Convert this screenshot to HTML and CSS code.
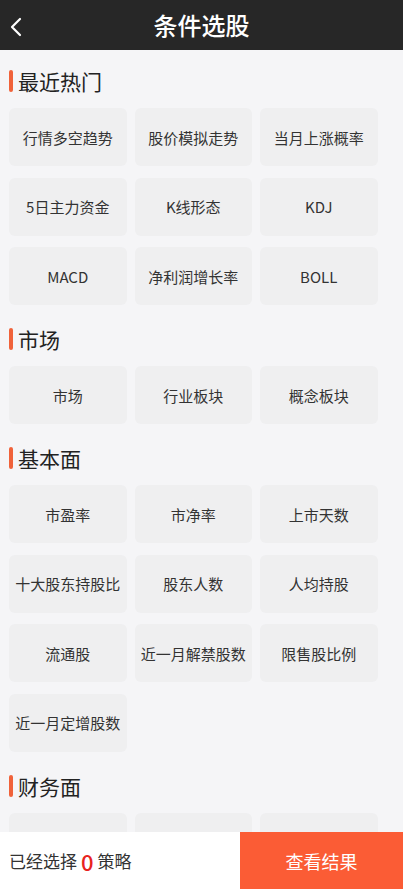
FILE: index.html
```html
<!DOCTYPE html>
<html lang="zh-CN">
<head>
  <meta charset="UTF-8">
  <meta name="viewport" content="width=device-width, initial-scale=1.0">
  <link rel="stylesheet" href="styles.css">
  <title>条件选股</title>
</head>
<body>
  <div class="page">
    <div class="header">
      <span class="back">
        <svg width="14" height="20" viewBox="0 0 14 20"><path d="M11 2 L3 10 L11 18" fill="none" stroke="#fff" stroke-width="2.2" stroke-linecap="round" stroke-linejoin="round"/></svg>
      </span>
      <h1 class="title">条件选股</h1>
    </div>

    <div class="content">
      <div class="section">
        <div class="section-title">最近热门</div>
        <div class="grid">
          <div class="item">行情多空趋势</div>
          <div class="item">股价模拟走势</div>
          <div class="item">当月上涨概率</div>
          <div class="item">5日主力资金</div>
          <div class="item">K线形态</div>
          <div class="item">KDJ</div>
          <div class="item">MACD</div>
          <div class="item">净利润增长率</div>
          <div class="item">BOLL</div>
        </div>
      </div>

      <div class="section">
        <div class="section-title">市场</div>
        <div class="grid">
          <div class="item">市场</div>
          <div class="item">行业板块</div>
          <div class="item">概念板块</div>
        </div>
      </div>

      <div class="section">
        <div class="section-title">基本面</div>
        <div class="grid">
          <div class="item">市盈率</div>
          <div class="item">市净率</div>
          <div class="item">上市天数</div>
          <div class="item">十大股东持股比</div>
          <div class="item">股东人数</div>
          <div class="item">人均持股</div>
          <div class="item">流通股</div>
          <div class="item">近一月解禁股数</div>
          <div class="item">限售股比例</div>
          <div class="item">近一月定增股数</div>
        </div>
      </div>

      <!-- rest of the list is hidden under the footer -->
      <div class="section">
        <div class="section-title">财务面</div>
        <div class="grid">
          <div class="item"></div>
          <div class="item"></div>
          <div class="item"></div>
        </div>
      </div>
    </div>

    <div class="footer">
      <div class="selected">已经选择 <span class="count">0</span> 策略</div>
      <div class="submit">查看结果</div>
    </div>
  </div>
</body>
</html>
```

FILE: styles.css
```css
body {
  margin: 0;
  font-family: "Noto Sans CJK SC", "Noto Sans", sans-serif;
  background-color: #f5f5f7;
  color: #333;
}

.page {
  display: flex;
  flex-direction: column;
  height: 100vh;
  overflow: hidden;
}

.header {
  flex: none;
  height: 50px;
  background-color: #272727;
  display: flex;
  align-items: center;
  justify-content: center;
  position: relative;
}

.back {
  position: absolute;
  left: 9px;
  top: 17px;
  display: flex;
}

.title {
  margin: 0;
  font-size: 24px;
  font-weight: 500;
  color: #fff;
  line-height: 50px;
}

.content {
  flex: 1;
  overflow: hidden;
}

.section-title {
  display: flex;
  align-items: center;
  height: 22px;
  margin: 23px 0 16px 9px;
  font-size: 21px;
  color: #222;
}

.section:first-child .section-title {
  margin-top: 20px;
}

.section-title::before {
  content: "";
  width: 4px;
  height: 22px;
  margin-right: 5px;
  border-radius: 2px;
  background-color: #f0623a;
}

.grid {
  display: grid;
  grid-template-columns: repeat(3, 117.5px);
  column-gap: 8px;
  row-gap: 11.5px;
  padding-left: 9px;
}

.item {
  height: 58px;
  display: flex;
  align-items: center;
  justify-content: center;
  background-color: #efeff0;
  border-radius: 6px;
  font-size: 15px;
  color: #333;
  white-space: nowrap;
}

.footer {
  flex: none;
  height: 57px;
  display: flex;
  background-color: #fff;
}

.selected {
  flex: 1;
  display: flex;
  align-items: center;
  padding-left: 9px;
  font-size: 17px;
  color: #333;
}

.count {
  margin: 0 4px;
  font-size: 22px;
  font-weight: 500;
  color: #e8231e;
}

.submit {
  width: 163px;
  display: flex;
  align-items: center;
  justify-content: center;
  background-color: #fb5c35;
  color: #fff;
  font-size: 18px;
}
```
